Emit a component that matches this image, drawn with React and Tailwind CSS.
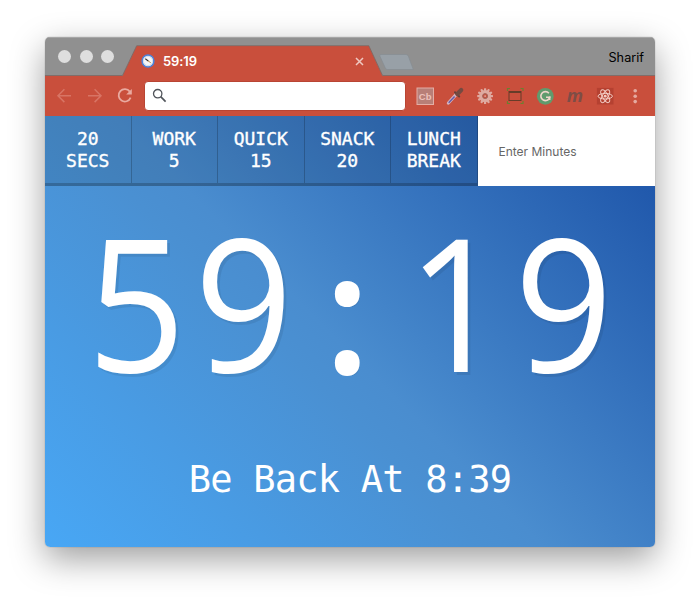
import React from 'react';

const presets = [
  ['20', 'SECS'],
  ['WORK', '5'],
  ['QUICK', '15'],
  ['SNACK', '20'],
  ['LUNCH', 'BREAK'],
];

function ClockIcon() {
  return (
    <svg width="14" height="14" viewBox="0 0 14 14">
      <circle cx="7" cy="7" r="5.9" fill="#f5f6f8" stroke="#4a84dc" strokeWidth="1.5" />
      <circle cx="7" cy="7" r="4.6" fill="none" stroke="#c5ccd6" strokeWidth=".6" />
      <path d="M4.3 4.8 7.3 7" stroke="#333" strokeWidth="1.1" />
      <path d="M7 6.8 9.8 8.8" stroke="#b98a45" strokeWidth="1" />
    </svg>
  );
}

function TabStrip() {
  return (
    <div className="relative h-[39px] bg-[#909090]">
      <svg className="absolute inset-0" width="610" height="39" viewBox="0 0 610 39">
        <path d="M0 .5H610" stroke="#a6a6a6" />
        <path d="M77.5 39 91.7 9H323.8L337.5 39Z" fill="#c94f3c" />
        <path d="M0 38.5H77.5L91.7 8.7H323.8L337.5 38.5H610" fill="none" stroke="#7d6560" strokeWidth=".8" />
        <path d="M335.8 17.5H361Q362.5 17.5 363.3 19L368.3 32.5H342.5Q341 32.5 340.3 31L334.8 19Q334.6 17.5 335.8 17.5Z" fill="#98a0a7" stroke="#858c92" strokeWidth=".7" />
      </svg>
      <div className="relative flex h-full items-center">
        <div className="ml-[13px] flex gap-[8.5px]">
          <span className="size-[13px] rounded-full bg-[#dedede]" />
          <span className="size-[13px] rounded-full bg-[#dedede]" />
          <span className="size-[13px] rounded-full bg-[#dedede]" />
        </div>
        <div className="ml-[27px] mt-[9px] flex items-center">
          <ClockIcon />
          <span className="ml-[8px] w-[192px] font-['Inter',sans-serif] text-[13px] leading-none font-semibold tracking-[-0.1px] text-white">59:19</span>
          <svg width="9" height="9" viewBox="0 0 9 9"><path d="M1 1 8 8M8 1 1 8" stroke="#efc9c2" strokeWidth="1.5" /></svg>
        </div>
        <span className="mr-[11px] mt-[3px] ml-auto font-['Inter',sans-serif] text-[12.7px] leading-none text-black">Sharif</span>
      </div>
    </div>
  );
}

function Extensions() {
  const teeth = Array.from({ length: 12 }, (_, i) => i * 30);
  return (
    <div className="ml-[9px] flex items-center gap-[10px]">
      <svg width="20" height="20" viewBox="0 0 20 20">
        <rect x="2" y="2" width="16.5" height="16.5" fill="#b87f77" stroke="#e4aea5" />
        <text x="10.2" y="13.6" textAnchor="middle" fontFamily="Liberation Sans, sans-serif" fontWeight="700" fontSize="9.5" fill="#edc1ba">Cb</text>
      </svg>
      <svg width="20" height="20" viewBox="0 0 20 20">
        <path d="M3.4 17 11 8.7" stroke="#d3b3bf" strokeWidth="3.2" strokeLinecap="round" />
        <path d="M3.7 16.8 9.6 10.5" stroke="#665aa8" strokeWidth="1.4" />
        <path d="m10 6.3 4.2 4.2" stroke="#63413b" strokeWidth="2" strokeLinecap="round" />
        <path d="M12.3 8 16.2 4" stroke="#744a41" strokeWidth="4.3" strokeLinecap="round" />
      </svg>
      <svg width="20" height="20" viewBox="0 0 20 20">
        {teeth.map((a) => (
          <rect key={a} x="9" y="2.2" width="2.2" height="4" rx=".6" fill="#dfaaa0" transform={`rotate(${a} 10.1 10.1)`} />
        ))}
        <circle cx="10.1" cy="10.1" r="4.3" fill="none" stroke="#dfaaa0" strokeWidth="3.6" />
        <circle cx="10.1" cy="10.1" r="2.5" fill="#c94f3c" stroke="#9d6a61" strokeWidth=".9" />
        <circle cx="10.1" cy="10.1" r=".9" fill="#e0afa6" />
      </svg>
      <svg width="20" height="20" viewBox="0 0 20 20">
        <rect x="4" y="5.5" width="12" height="9" fill="none" stroke="#673c29" />
        <path d="M4 6.2H16" stroke="#673c29" strokeWidth="1.6" />
        <path d="M2.5 5V2.5H5M15.5 2.5H18V5M2.5 15V17.5H5M15.5 17.5H18V15" fill="none" stroke="#6b8030" strokeWidth="1.2" />
      </svg>
      <svg width="20" height="20" viewBox="0 0 20 20">
        <circle cx="10.3" cy="10.3" r="8.4" fill="#609b6d" />
        <path d="M13.9 7.3A4.5 4.5 0 1 0 14.7 11.3H11" fill="none" stroke="#efd6cb" strokeWidth="1.6" />
        <path d="M14.7 10.5V14" stroke="#efd6cb" strokeWidth="1.5" />
      </svg>
      <span className="flex h-10 w-5 items-center justify-center pb-[2px] font-['Open_Sans',sans-serif] text-[18px] leading-10 font-bold text-[#7d4d46] italic">m</span>
      <svg width="20" height="20" viewBox="0 0 20 20">
        <rect x="1.9" y="1.9" width="16.6" height="16.6" fill="#b54131" />
        <g fill="none" stroke="#f3cdc5" strokeWidth="1">
          <ellipse cx="10.2" cy="10.2" rx="7.2" ry="2.8" />
          <ellipse cx="10.2" cy="10.2" rx="7.2" ry="2.8" transform="rotate(60 10.2 10.2)" />
          <ellipse cx="10.2" cy="10.2" rx="7.2" ry="2.8" transform="rotate(120 10.2 10.2)" />
        </g>
        <circle cx="10.2" cy="10.2" r="1.4" fill="#f3cdc5" />
      </svg>
      <svg width="20" height="20" viewBox="0 0 20 20" fill="#e5aaa0">
        <circle cx="10.2" cy="4.8" r="1.8" />
        <circle cx="10.2" cy="10.2" r="1.8" />
        <circle cx="10.2" cy="15.6" r="1.8" />
      </svg>
    </div>
  );
}

function Toolbar() {
  return (
    <div className="flex h-10 items-center bg-[#c94f3c] pb-[1px]">
      <svg className="shrink-0" width="99" height="40" viewBox="0 0 99 40" fill="none" strokeWidth="1.5">
        <g stroke="#d87464">
          <path d="M26 19.7H13.2M19.4 13.3 13 19.7 19.4 26.1" />
          <path d="M43 19.7H55.8M49.6 13.3 56 19.7 49.6 26.1" />
        </g>
        <path d="M84.8 15.6A6.2 6.2 0 1 0 85.6 21.7" stroke="#e9aaa0" strokeWidth="1.8" />
        <path d="M86.8 12.9V18.4H81.2Z" fill="#e9aaa0" />
      </svg>
      <div className="flex h-[30px] w-[262px] items-center rounded-[4px] border border-[#b94533] bg-white pl-[7px]">
        <svg width="15" height="15" viewBox="0 0 15 15" fill="none" stroke="#50545a">
          <circle cx="5.7" cy="5.7" r="4.2" strokeWidth="1.3" />
          <path d="m8.7 8.7 4.9 4.9" strokeWidth="1.7" />
        </svg>
      </div>
      <Extensions />
    </div>
  );
}

export default function App() {
  return (
    <div className="h-[600px] w-[700px] overflow-hidden bg-white pt-[37px] pl-[45px]">
      <div className="h-[510px] w-[610px] rounded-[5px] shadow-[0_0_1px_rgba(0,0,0,0.5),0_12px_34px_rgba(0,0,0,0.38)]">
        <div className="flex h-full flex-col overflow-hidden rounded-[5px]">
          <TabStrip />
          <Toolbar />
          <main className="flex flex-1 flex-col bg-[linear-gradient(45deg,#48a7f5_0%,#4a90d2_42%,#4a8dcf_48%,#1a50a6_100%)] text-white">
            <div className="flex h-[70px]">
              {presets.map(([top, bottom]) => (
                <button
                  key={top + bottom}
                  className="w-[86.5px] border-r border-b-[3px] border-black/20 bg-black/10 bg-clip-border pt-[1px] font-['DejaVu_Sans_Mono',monospace] text-[18px] leading-[22.5px] [-webkit-text-stroke:0.35px_white]"
                >
                  <span className="block">{top}</span>
                  <span className="block">{bottom}</span>
                </button>
              ))}
              <div className="flex flex-1 items-center bg-white pt-[1px] pl-[21px] font-['Inter',sans-serif] text-[12px] text-[#666]">Enter Minutes</div>
            </div>
            <h1 className="mt-[3px] ml-[9px] flex h-[222px] origin-center scale-x-[0.925] justify-center font-['Open_Sans',sans-serif] text-[186px] leading-[222px] font-normal tracking-[9.6px] [text-shadow:3px_3px_0_rgba(0,0,0,0.07)]">
              <span>59</span>
              <span className="flex w-[114px] justify-center pr-[16px] pt-[10px] text-[157px] tracking-normal [-webkit-text-stroke:6px_white]">
                <span className="scale-x-[1.1]">:</span>
              </span>
              <span>19</span>
            </h1>
            <p className="mt-[44px] text-center font-['DejaVu_Sans_Mono',monospace] text-[37px] leading-[50px] tracking-[-0.78px]">Be Back At 8:39</p>
          </main>
        </div>
      </div>
    </div>
  );
}
